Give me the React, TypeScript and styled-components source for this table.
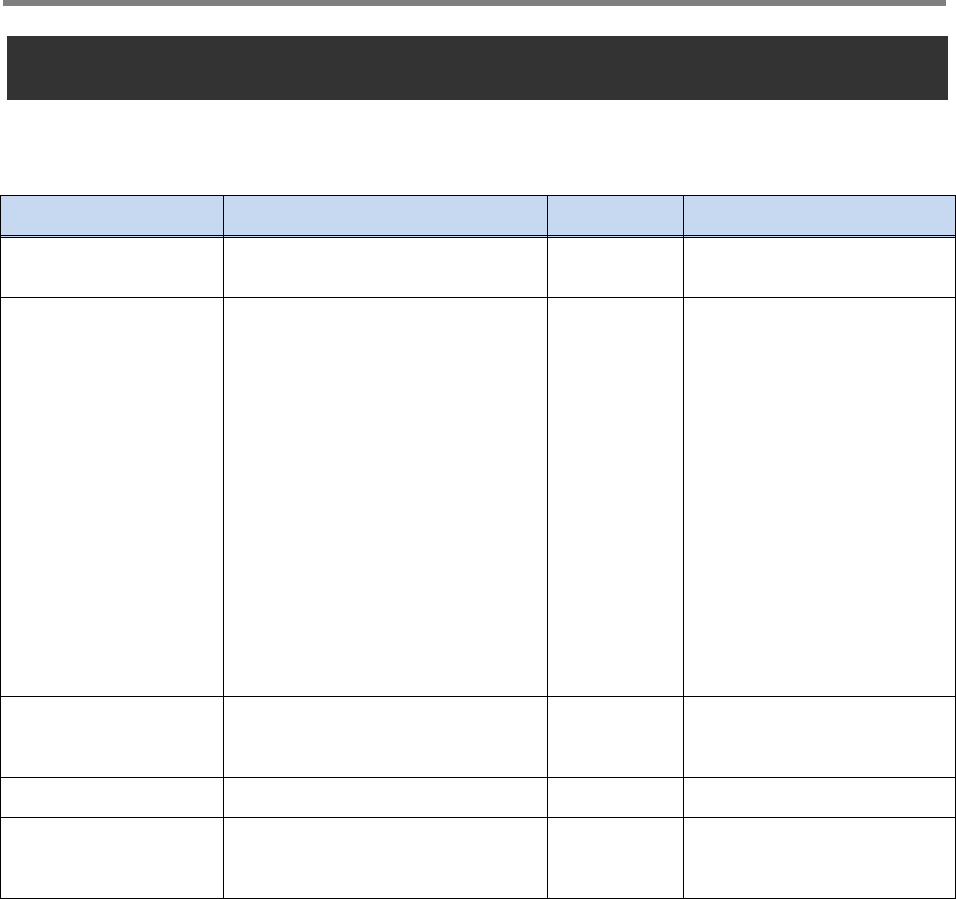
import styled, { createGlobalStyle } from "styled-components";

const GlobalStyle = createGlobalStyle`
  html, body {
    margin: 0;
    padding: 0;
    background: #ffffff;
    font-family: "Liberation Sans", Arial, sans-serif;
  }
`;

const Page = styled.div`
  width: 956px;
  display: flex;
  flex-direction: column;
`;

const TopRule = styled.div`
  margin-left: 3px;
  width: 943px;
  height: 6px;
  background: #7f7f7f;
`;

const TitleBar = styled.div`
  margin: 30px 0 0 7px;
  width: 941px;
  height: 64px;
  background: #333333;
`;

const Table = styled.div`
  margin-top: 95px;
  display: grid;
  grid-template-columns: 223px 324px 136px 272px;
  grid-template-rows: 42px 60px 399px 81px 40px 81px;
  border-top: 1px solid #000;
  border-left: 1px solid #000;
  box-sizing: border-box;
  width: 956px;
`;

const Cell = styled.div<{ $head?: boolean }>`
  box-sizing: border-box;
  border-right: 1px solid #000;
  border-bottom: ${(p) => (p.$head ? "3px double #000" : "1px solid #000")};
  background: ${(p) => (p.$head ? "#c6d9f1" : "#ffffff")};
`;

const COLS = 4;
const BODY_ROWS = 5;

const App = () => {
  return (
    <>
      <GlobalStyle />
      <Page>
        <TopRule />
        <TitleBar />
        <Table>
          {Array.from({ length: COLS }).map((_, i) => (
            <Cell key={`h${i}`} $head />
          ))}
          {Array.from({ length: BODY_ROWS * COLS }).map((_, i) => (
            <Cell key={`c${i}`} />
          ))}
        </Table>
      </Page>
    </>
  );
};

export default App;
